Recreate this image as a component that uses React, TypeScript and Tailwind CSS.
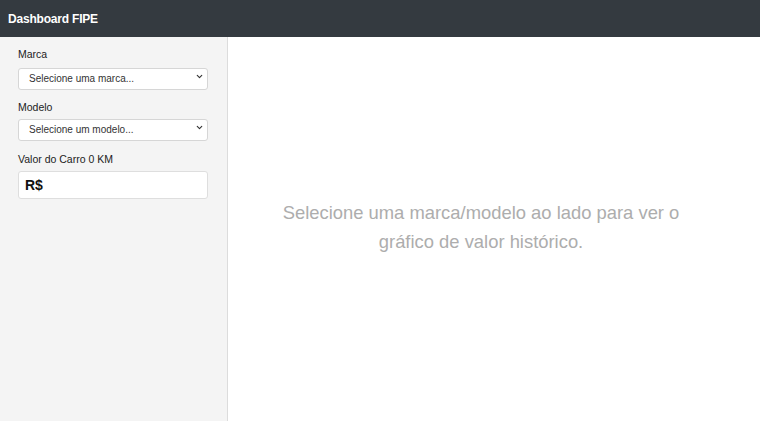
import { ChevronDown } from 'lucide-react';

const font = { fontFamily: '"Liberation Sans", Arial, sans-serif' };

function SelectBox({ placeholder }: { placeholder: string }) {
  return (
    <div className="relative h-[22px]">
      <select
        defaultValue=""
        className="w-full h-full appearance-none bg-white border border-[#d6d6d6] rounded-[3px] pl-[10px] pr-6 text-[10px] text-[#333] outline-none"
      >
        <option value="">{placeholder}</option>
      </select>
      <ChevronDown size={9} strokeWidth={3} className="absolute right-[4px] top-[7px] text-[#333] pointer-events-none" />
    </div>
  );
}

export default function App() {
  return (
    <div className="flex flex-col h-screen bg-white overflow-hidden" style={font}>
      {/* HEADER */}
      <div className="h-[37px] shrink-0 bg-[#343a40] flex items-center px-[8px]">
        <span className="text-white font-bold text-[12px] tracking-[-0.2px]">Dashboard FIPE</span>
      </div>

      <div className="flex flex-1 min-h-0">
        {/* SIDEBAR */}
        <div className="w-[228px] shrink-0 bg-[#f4f4f4] border-r border-[#dcdcdc] pl-[18px] pr-[19px] pt-[11px]">
          <div className="text-[10.5px] text-[#222] leading-[13px] mb-[4px]">Marca</div>
          <SelectBox placeholder="Selecione uma marca..." />

          <div className="text-[10.5px] text-[#222] leading-[13px] mt-[14px] mb-[2px]">Modelo</div>
          <SelectBox placeholder="Selecione um modelo..." />

          <div className="text-[10.5px] text-[#222] leading-[13px] mt-[15px] mb-[5px]">Valor do Carro 0 KM</div>
          <div className="h-[28px] bg-white border border-[#dedede] rounded-[3px] flex items-center px-[6px]">
            <span className="text-[14px] font-bold text-[#111]">R$</span>
          </div>
        </div>

        {/* MAIN */}
        <div className="flex-1 flex justify-center pr-[26px] pt-[161px]">
          <p className="w-[430px] text-center text-[18.4px] leading-[29px] text-[#adadad]">
            Selecione uma marca/modelo ao lado para ver o gráfico de valor histórico.
          </p>
        </div>
      </div>
    </div>
  );
}
